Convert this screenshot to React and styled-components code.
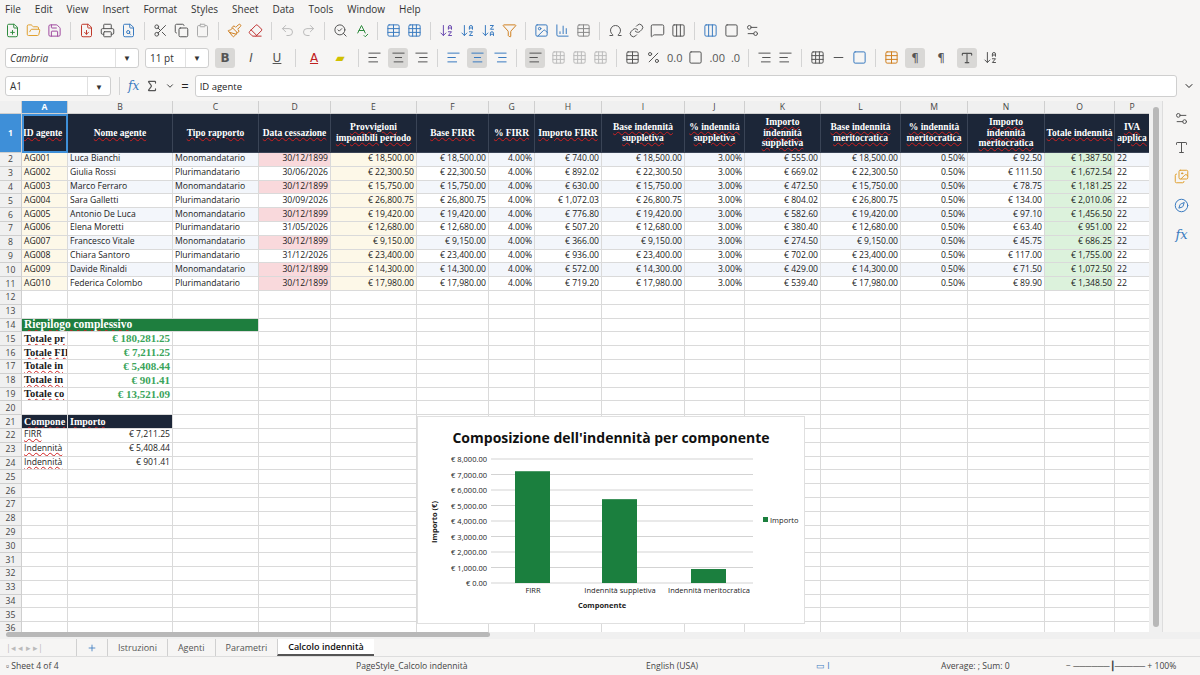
import React from "react";
import styled, {createGlobalStyle} from "styled-components";
import {
  FilePlus, FolderOpen, Save, FileDown, Printer, FileSearch, Scissors, Copy, Clipboard, Paintbrush, Eraser,
  Undo2, Redo2, SearchCheck, SpellCheck, Table, Grid3x3, ArrowDownAZ, ArrowDownZA, Filter, Image, BarChart3,
  Omega, Link, MessageSquare, Sigma, ChevronDown, AlignLeft, AlignCenter, AlignRight, Percent, Settings2,
  Type, Images, Compass, Square, Columns3, Minus, Plus
} from "lucide-react";

const Global = createGlobalStyle`
  body { margin: 0; font-family: "Open Sans", "Liberation Sans", sans-serif; background: #fafafa; overflow: hidden; }
`;

const Page = styled.div`
  width: 1200px;
  height: 675px;
  display: flex;
  flex-direction: column;
  background: #f6f5f4;
  font-size: 10px;
  color: #222;
`;

const MenuBar = styled.div`
  height: 17px;
  display: flex;
  align-items: center;
  gap: 14px;
  padding-left: 5px;
  font-size: 10px;
  color: #333;
`;

const ToolRow = styled.div`
  height: ${(p) => p.$h || 27}px;
  display: flex;
  align-items: center;
  gap: 6px;
  padding-left: 5px;
  color: #555;
`;

const Sep = styled.div`
  width: 1px;
  height: 18px;
  background: #d4d4d4;
  margin: 0 2px;
`;

const Combo = styled.div`
  width: ${(p) => p.$w}px;
  height: 20px;
  background: #fff;
  border: 1px solid #cfcfcf;
  border-radius: 3px;
  display: flex;
  align-items: center;
  justify-content: space-between;
  padding-left: 4px;
  font-size: 10px;
  font-style: ${(p) => (p.$italic ? "italic" : "normal")};
  box-sizing: border-box;
  color: #333;
`;

const ComboArrow = styled.div`
  width: 22px;
  height: 100%;
  border-left: 1px solid #e0e0e0;
  display: flex;
  align-items: center;
  justify-content: center;
  font-size: 8px;
`;

const Btn = styled.div`
  width: 20px;
  height: 20px;
  display: flex;
  align-items: center;
  justify-content: center;
  border-radius: 3px;
  background: ${(p) => (p.$on ? "#d9d8d6" : "transparent")};
  font-weight: ${(p) => (p.$b ? 700 : 400)};
  font-style: ${(p) => (p.$i ? "italic" : "normal")};
  text-decoration: ${(p) => (p.$u ? "underline" : "none")};
  font-family: "DejaVu Sans", sans-serif;
  font-size: 12px;
  color: ${(p) => p.$c || "#555"};
`;

const FormulaBar = styled.div`
  height: 30px;
  display: flex;
  align-items: center;
  gap: 6px;
  padding: 0 5px;
`;

const FormulaInput = styled.div`
  flex: 1;
  height: 20px;
  background: #fff;
  border: 1px solid #cfcfcf;
  border-radius: 3px;
  display: flex;
  align-items: center;
  padding-left: 4px;
  font-size: 9.5px;
`;

const Main = styled.div`
  flex: 1;
  display: flex;
  min-height: 0;
`;

const SheetArea = styled.div`
  width: 1150px;
  position: relative;
  overflow: hidden;
  background: #fff;
`;

const Grid = styled.div`
  display: grid;
  grid-template-columns: 22px 46px 105px 86px 72px 86px 72px 46px 67px 83px 60px 76px 80px 67px 77px 70px 35px;
  grid-template-rows: 13px 39px repeat(35, 13.8px);
`;

const Cell = styled.div`
  box-sizing: border-box;
  border-right: 1px solid #dadada;
  border-bottom: 1px solid #dadada;
  background: ${(p) => p.$bg || "#fff"};
  color: ${(p) => p.$color || "#1a1a1a"};
  font-family: ${(p) => (p.$serif ? '"Liberation Serif", "DejaVu Serif", serif' : '"Open Sans", "Liberation Sans", sans-serif')};
  font-size: ${(p) => (p.$serif ? "10px" : "8.6px")};
  font-weight: ${(p) => (p.$bold ? 700 : 400)};
  display: flex;
  align-items: center;
  justify-content: ${(p) => p.$align || "flex-start"};
  text-align: ${(p) => (p.$align === "center" ? "center" : "left")};
  padding: 0 2px;
  white-space: nowrap;
  overflow: hidden;
  line-height: 1.15;
  grid-column: ${(p) => p.$span || "auto"};
  text-decoration: ${(p) => (p.$wavy ? "underline wavy #d02020" : "none")};
  text-decoration-thickness: 1px;
`;

const HeadCell = styled(Cell)`
  background: #1c2638;
  color: #fff;
  white-space: normal;
  border-color: #3a4456;
  font-size: 9.5px;
  padding: 0 1px;
  & span { text-decoration: underline wavy #d02020; text-decoration-thickness: 1px; }
`;

const ColHead = styled.div`
  box-sizing: border-box;
  background: ${(p) => (p.$sel ? "#3e8fd8" : "#f0f0f0")};
  color: ${(p) => (p.$sel ? "#fff" : "#444")};
  font-weight: ${(p) => (p.$sel ? 700 : 400)};
  border-right: 1px solid #cfcfcf;
  border-bottom: 1px solid #cfcfcf;
  font-size: 8.6px;
  display: flex;
  align-items: center;
  justify-content: center;
`;

const ChartBox = styled.div`
  position: absolute;
  left: 417px;
  top: 315px;
  width: 388px;
  height: 208px;
  background: #fff;
  border: 1px solid #e0e0e0;
  box-sizing: border-box;
`;

const VScroll = styled.div`
  width: 13px;
  background: #f0f0f0;
  display: flex;
  justify-content: center;
  padding-top: 6px;
  & > div { width: 6px; height: 520px; background: #b8b8b8; border-radius: 3px; }
`;

const Sidebar = styled.div`
  width: 37px;
  border-left: 1px solid #ddd;
  display: flex;
  flex-direction: column;
  align-items: center;
  gap: 14px;
  padding-top: 10px;
  color: #4a6fa5;
`;

const HScroll = styled.div`
  height: 7px;
  background: #f0f0f0;
  padding-left: 6px;
  & > div { width: 484px; height: 5px; background: #b8b8b8; border-radius: 3px; }
`;

const Tabs = styled.div`
  height: 17px;
  display: flex;
  align-items: stretch;
  font-size: 9px;
  color: #444;
  padding-left: 6px;
`;

const Tab = styled.div`
  padding: 0 10px;
  display: flex;
  align-items: center;
  border-left: 1px solid #d0d0d0;
  font-weight: ${(p) => (p.$active ? 600 : 400)};
  color: ${(p) => (p.$active ? "#111" : "#555")};
  background: ${(p) => (p.$active ? "#fff" : "transparent")};
  border-bottom: ${(p) => (p.$active ? "2px solid #555" : "none")};
`;

const Status = styled.div`
  height: 18px;
  display: grid;
  grid-template-columns: 270px 320px 200px 90px 180px 140px;
  align-items: center;
  font-size: 8.6px;
  color: #444;
  padding-left: 6px;
  border-top: 1px solid #ddd;
`;

const SmallIcon = ({C, color = "#555", size = 15}) => <C size={size} color={color} strokeWidth={1.6} />;

const rows = [
  ["AG001", "Luca Bianchi", "Monomandatario", "30/12/1899", "€ 18,500.00", "€ 740.00", "€ 555.00", "€ 92.50", "€ 1,387.50"],
  ["AG002", "Giulia Rossi", "Plurimandatario", "30/06/2026", "€ 22,300.50", "€ 892.02", "€ 669.02", "€ 111.50", "€ 1,672.54"],
  ["AG003", "Marco Ferraro", "Monomandatario", "30/12/1899", "€ 15,750.00", "€ 630.00", "€ 472.50", "€ 78.75", "€ 1,181.25"],
  ["AG004", "Sara Galletti", "Plurimandatario", "30/09/2026", "€ 26,800.75", "€ 1,072.03", "€ 804.02", "€ 134.00", "€ 2,010.06"],
  ["AG005", "Antonio De Luca", "Monomandatario", "30/12/1899", "€ 19,420.00", "€ 776.80", "€ 582.60", "€ 97.10", "€ 1,456.50"],
  ["AG006", "Elena Moretti", "Plurimandatario", "31/05/2026", "€ 12,680.00", "€ 507.20", "€ 380.40", "€ 63.40", "€ 951.00"],
  ["AG007", "Francesco Vitale", "Monomandatario", "30/12/1899", "€ 9,150.00", "€ 366.00", "€ 274.50", "€ 45.75", "€ 686.25"],
  ["AG008", "Chiara Santoro", "Plurimandatario", "31/12/2026", "€ 23,400.00", "€ 936.00", "€ 702.00", "€ 117.00", "€ 1,755.00"],
  ["AG009", "Davide Rinaldi", "Monomandatario", "30/12/1899", "€ 14,300.00", "€ 572.00", "€ 429.00", "€ 71.50", "€ 1,072.50"],
  ["AG010", "Federica Colombo", "Plurimandatario", "30/12/1899", "€ 17,980.00", "€ 719.20", "€ 539.40", "€ 89.90", "€ 1,348.50"],
];

const heads = [
  "ID agente", "Nome agente", "Tipo rapporto", "Data cessazione", "Provvigioni imponibili periodo", "Base FIRR", "% FIRR",
  "Importo FIRR", "Base indennità suppletiva", "% indennità suppletiva", "Importo indennità suppletiva",
  "Base indennità meritocratica", "% indennità meritocratica", "Importo indennità meritocratica", "Totale indennità", "IVA applica",
];

const letters = "ABCDEFGHIJKLMNOP".split("");
const blank = (n, k) => Array.from({length: n}, (_, i) => <Cell key={k + i} />);

const DataRow = ({r, i}) => {
  const stripe = i % 2 === 0 ? "#f3f6fb" : "#fff";
  const pink = r[3].endsWith("1899");
  return (
    <>
      <ColHead>{i + 2}</ColHead>
      <Cell $bg="#fdf8e8">{r[0]}</Cell>
      <Cell $bg={stripe}>{r[1]}</Cell>
      <Cell $bg={stripe}>{r[2]}</Cell>
      <Cell $bg={pink ? "#f9d9dc" : stripe} $align="flex-end">{r[3]}</Cell>
      <Cell $bg="#fdf8e8" $align="flex-end">{r[4]}</Cell>
      <Cell $bg={stripe} $align="flex-end">{r[4]}</Cell>
      <Cell $bg={stripe} $align="flex-end">4.00%</Cell>
      <Cell $bg={stripe} $align="flex-end">{r[5]}</Cell>
      <Cell $bg={stripe} $align="flex-end">{r[4]}</Cell>
      <Cell $bg={stripe} $align="flex-end">3.00%</Cell>
      <Cell $bg={stripe} $align="flex-end">{r[6]}</Cell>
      <Cell $bg={stripe} $align="flex-end">{r[4]}</Cell>
      <Cell $bg={stripe} $align="flex-end">0.50%</Cell>
      <Cell $bg={stripe} $align="flex-end">{r[7]}</Cell>
      <Cell $bg="#dcf2dc" $align="flex-end">{r[8]}</Cell>
      <Cell $bg={stripe}>22</Cell>
    </>
  );
};

const totals = [
  ["Totale pr", "€ 180,281.25"], ["Totale FII", "€ 7,211.25"], ["Totale in", "€ 5,408.44"],
  ["Totale in", "€ 901.41"], ["Totale co", "€ 13,521.09"],
];
const comps = [["FIRR", "€ 7,211.25"], ["Indennità", "€ 5,408.44"], ["Indennità", "€ 901.41"]];

const Chart = () => {
  const y = (v) => 166 - (v / 1000) * 15.5;
  const ticks = [0, 1, 2, 3, 4, 5, 6, 7, 8];
  const bars = [[97, 7211.25, "FIRR", 115], [184, 5408.44, "Indennità suppletiva", 202], [273, 901.41, "Indennità meritocratica", 291]];
  return (
    <ChartBox>
      <svg width="386" height="206" fontFamily="Open Sans, sans-serif">
        <text x="193" y="26" textAnchor="middle" fontSize="14" fontWeight="700" fill="#111">Composizione dell'indennità per componente</text>
        {ticks.map((t) => (
          <g key={t}>
            <line x1="73" x2="335" y1={y(t * 1000)} y2={y(t * 1000)} stroke="#c8c8c8" strokeWidth="0.8" />
            <text x="69" y={y(t * 1000) + 3} textAnchor="end" fontSize="7.5" fill="#222">{t === 0 ? "€ 0.00" : `€ ${t},000.00`}</text>
          </g>
        ))}
        {bars.map(([x, v, l, c]) => (
          <g key={l}>
            <rect x={x} y={y(v)} width="35" height={166 - y(v)} fill="#1b7f3e" />
            <text x={c} y="176" textAnchor="middle" fontSize="7.5" fill="#222">{l}</text>
          </g>
        ))}
        <text x="184" y="191" textAnchor="middle" fontSize="7.5" fontWeight="700" fill="#222">Componente</text>
        <text transform="translate(19 105) rotate(-90)" textAnchor="middle" fontSize="7.5" fontWeight="700" fill="#222">Importo (€)</text>
        <rect x="345" y="100" width="5" height="5" fill="#1b7f3e" />
        <text x="352" y="106" fontSize="7.5" fill="#222">Importo</text>
      </svg>
    </ChartBox>
  );
};

export default function App() {
  return (
    <Page>
      <Global />
      <MenuBar>
        {["File", "Edit", "View", "Insert", "Format", "Styles", "Sheet", "Data", "Tools", "Window", "Help"].map((m) => (
          <span key={m}>{m}</span>
        ))}
      </MenuBar>
      <ToolRow>
        <SmallIcon C={FilePlus} color="#2e8b3e" /><SmallIcon C={FolderOpen} color="#e0a030" /><SmallIcon C={Save} color="#a04aa0" />
        <Sep /><SmallIcon C={FileDown} color="#c0392b" /><SmallIcon C={Printer} /><SmallIcon C={FileSearch} color="#3a7bc0" />
        <Sep /><SmallIcon C={Scissors} /><SmallIcon C={Copy} /><SmallIcon C={Clipboard} color="#aaa" />
        <Sep /><SmallIcon C={Paintbrush} color="#d08020" /><SmallIcon C={Eraser} color="#c03030" />
        <Sep /><SmallIcon C={Undo2} color="#bbb" /><SmallIcon C={Redo2} color="#bbb" />
        <Sep /><SmallIcon C={SearchCheck} /><SmallIcon C={SpellCheck} color="#2e8b3e" />
        <Sep /><SmallIcon C={Table} color="#3a7bc0" /><SmallIcon C={Grid3x3} color="#3a7bc0" />
        <Sep /><SmallIcon C={ArrowDownAZ} color="#6a4ab0" /><SmallIcon C={ArrowDownAZ} color="#3a7bc0" /><SmallIcon C={ArrowDownZA} color="#3a7bc0" /><SmallIcon C={Filter} color="#d08020" />
        <Sep /><SmallIcon C={Image} color="#3a7bc0" /><SmallIcon C={BarChart3} color="#3a7bc0" /><SmallIcon C={Table} color="#888" />
        <Sep /><SmallIcon C={Omega} /><SmallIcon C={Link} /><SmallIcon C={MessageSquare} /><SmallIcon C={Columns3} />
        <Sep /><SmallIcon C={Columns3} color="#3a7bc0" /><SmallIcon C={Square} /><SmallIcon C={Settings2} />
      </ToolRow>
      <ToolRow>
        <Combo $w={134} $italic>Cambria<ComboArrow>▼</ComboArrow></Combo>
        <Combo $w={64}>11 pt<ComboArrow>▼</ComboArrow></Combo>
        <Btn $on $b>B</Btn><Btn $i>I</Btn><Btn $u>U</Btn>
        <Sep /><Btn $c="#c02020" $u>A</Btn><Btn $c="#d0c000">▰</Btn>
        <Sep /><SmallIcon C={AlignLeft} /><Btn $on><AlignCenter size={15} strokeWidth={1.6} /></Btn><SmallIcon C={AlignRight} />
        <Sep /><SmallIcon C={AlignLeft} color="#3a7bc0" /><Btn $on><AlignCenter size={15} color="#3a7bc0" strokeWidth={1.6} /></Btn><SmallIcon C={AlignRight} color="#3a7bc0" />
        <Sep /><Btn $on><AlignLeft size={15} strokeWidth={1.6} /></Btn><SmallIcon C={Grid3x3} color="#bbb" /><SmallIcon C={Grid3x3} color="#bbb" /><SmallIcon C={Grid3x3} color="#bbb" />
        <Sep /><SmallIcon C={Table} /><SmallIcon C={Percent} /><span style={{fontSize: 11}}>0.0</span><SmallIcon C={Square} />
        <span style={{fontSize: 11}}>.00</span><span style={{fontSize: 11}}>.0</span>
        <Sep /><SmallIcon C={AlignRight} /><SmallIcon C={AlignLeft} />
        <Sep /><SmallIcon C={Grid3x3} /><SmallIcon C={Minus} /><SmallIcon C={Square} color="#3a7bc0" />
        <Sep /><SmallIcon C={Table} color="#d08020" /><Btn $on>¶</Btn><Btn>¶</Btn><Btn $on><Type size={14} /></Btn><SmallIcon C={ArrowDownAZ} />
      </ToolRow>
      <FormulaBar>
        <Combo $w={106}>A1<ComboArrow>▼</ComboArrow></Combo>
        <Sep />
        <span style={{fontStyle: "italic", color: "#3a7bc0", fontFamily: "DejaVu Serif, serif", fontSize: 12}}>fx</span>
        <Sigma size={14} color="#555" /><ChevronDown size={10} /><span style={{fontSize: 13}}>=</span>
        <FormulaInput>ID agente</FormulaInput>
        <ChevronDown size={12} />
      </FormulaBar>
      <Main>
        <SheetArea>
          <Grid>
            <ColHead />
            {letters.map((l, i) => <ColHead key={l} $sel={i === 0}>{l}</ColHead>)}
            <ColHead $sel>1</ColHead>
            {heads.map((h, i) => (
              <HeadCell key={h} $serif $bold $align={i === 0 ? "flex-start" : "center"} style={i === 0 ? {outline: "2px solid #3e8fd8", outlineOffset: -2, whiteSpace: "nowrap"} : undefined}>
                <span>{h}</span>
              </HeadCell>
            ))}
            {rows.map((r, i) => <DataRow key={r[0]} r={r} i={i} />)}
            {[12, 13].map((n) => <React.Fragment key={n}><ColHead>{n}</ColHead>{blank(16, "b" + n)}</React.Fragment>)}
            <ColHead>14</ColHead>
            <Cell $span="span 3" $bg="#1e7e3e" $color="#fff" $serif $bold $wavy style={{fontSize: 11.5}}>Riepilogo complessivo</Cell>
            {blank(13, "c14")}
            {totals.map(([l, v], i) => (
              <React.Fragment key={i}>
                <ColHead>{15 + i}</ColHead>
                <Cell $serif $bold $wavy style={{fontSize: 10.5}}>{l}</Cell>
                <Cell $serif $bold $color="#3aa45a" $align="flex-end" style={{fontSize: 11}}>{v}</Cell>
                {blank(14, "t" + i)}
              </React.Fragment>
            ))}
            <ColHead>20</ColHead>{blank(16, "r20")}
            <ColHead>21</ColHead>
            <Cell $bg="#1c2638" $color="#fff" $serif $bold $wavy>Compone</Cell>
            <Cell $bg="#1c2638" $color="#fff" $serif $bold $wavy>Importo</Cell>
            {blank(14, "r21")}
            {comps.map(([l, v], i) => (
              <React.Fragment key={i}>
                <ColHead>{22 + i}</ColHead>
                <Cell $wavy>{l}</Cell>
                <Cell $align="flex-end">{v}</Cell>
                {blank(14, "k" + i)}
              </React.Fragment>
            ))}
            {Array.from({length: 12}, (_, i) => 25 + i).map((n) => (
              <React.Fragment key={n}><ColHead>{n}</ColHead>{blank(16, "e" + n)}</React.Fragment>
            ))}
          </Grid>
          <Chart />
        </SheetArea>
        <VScroll><div /></VScroll>
        <Sidebar>
          <SmallIcon C={Settings2} color="#555" /><SmallIcon C={Type} color="#555" /><SmallIcon C={Images} color="#e0a030" />
          <SmallIcon C={Compass} color="#3a7bc0" />
          <span style={{fontStyle: "italic", color: "#3a7bc0", fontFamily: "DejaVu Serif, serif", fontSize: 13}}>fx</span>
        </Sidebar>
      </Main>
      <HScroll><div /></HScroll>
      <Tabs>
        <span style={{color: "#bbb", display: "flex", alignItems: "center", width: 70}}>|◂ ◂ ▸ ▸|</span>
        <Tab><Plus size={10} color="#3a7bc0" /></Tab>
        <Tab>Istruzioni</Tab><Tab>Agenti</Tab><Tab>Parametri</Tab><Tab $active>Calcolo indennità</Tab>
      </Tabs>
      <Status>
        <span>▫ Sheet 4 of 4</span>
        <span style={{paddingLeft: 80}}>PageStyle_Calcolo indennità</span>
        <span style={{paddingLeft: 50}}>English (USA)</span>
        <span style={{paddingLeft: 20, color: "#3a7bc0"}}>▭ I</span>
        <span style={{paddingLeft: 55}}>Average: ; Sum: 0</span>
        <span>−  ──────┃───── +   100%</span>
      </Status>
    </Page>
  );
}
